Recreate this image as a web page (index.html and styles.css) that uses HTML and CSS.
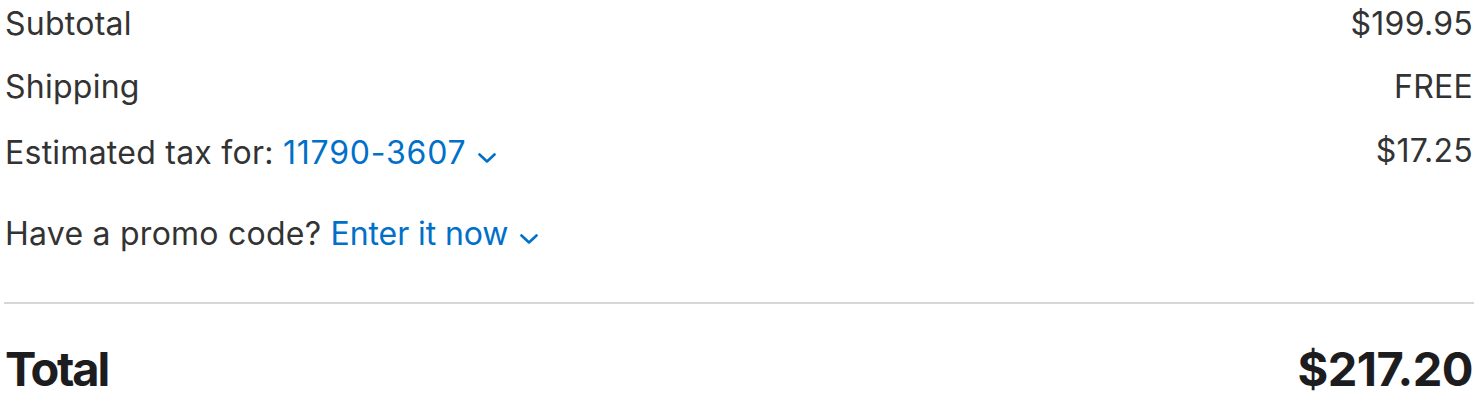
FILE: index.html
```html
<!DOCTYPE html>
<html lang="en">
<head>
    <meta charset="UTF-8">
    <meta name="viewport" content="width=device-width, initial-scale=1.0">
    <title>Order Summary</title>
    <link rel="stylesheet" href="styles.css">
</head>
<body>
    <div class="summary">
        <div class="row row-first">
            <span>Subtotal</span>
            <span>$199.95</span>
        </div>
        <div class="row">
            <span>Shipping</span>
            <span>FREE</span>
        </div>
        <div class="row row-tax">
            <span>Estimated tax for: <a href="#" class="link zip">11790-3607<svg class="chevron" viewBox="0 0 18 10"><path d="M1.5 1.5 L9 8.5 L16.5 1.5"/></svg></a></span>
            <span class="tax-value">$17.25</span>
        </div>
        <div class="row row-promo">
            <span>Have a promo code? <a href="#" class="link promo">Enter it now<svg class="chevron" viewBox="0 0 18 10"><path d="M1.5 1.5 L9 8.5 L16.5 1.5"/></svg></a></span>
        </div>

        <hr class="divider">

        <div class="row total">
            <span class="total-label">Total</span>
            <span>$217.20</span>
        </div>
    </div>
</body>
</html>
```

FILE: styles.css
```css
body { margin: 0; font-family: Inter, "Noto Sans", Arial, sans-serif; color: #333; background: #fff; }
.summary { padding: 0 10px 0 4px; }
.row { display: flex; justify-content: space-between; align-items: baseline; font-size: 32px; line-height: 40px; padding: 0 1px; margin-top: 23px; letter-spacing: 0.25px; }
.row-first { margin-top: 4px; }
.row-tax { margin-top: 26px; }
.tax-value { position: relative; top: -2px; }
.row-promo { margin-top: 41px; }
.link { color: #0070c9; text-decoration: none; }
.zip { letter-spacing: 0.8px; }
.promo { letter-spacing: -0.1px; }
.chevron { width: 18px; height: 10px; margin-left: 12px; fill: none; stroke: #0070c9; stroke-width: 2.6; stroke-linecap: round; stroke-linejoin: round; vertical-align: 1px; }
.divider { border: none; border-top: 2px solid #d6d6d6; margin: 48px 0 0 0; }
.total { font-size: 47px; line-height: 56px; font-weight: 700; color: #1d1d1f; margin-top: 37px; letter-spacing: -0.5px; }
.total-label { letter-spacing: -2.2px; }
```
